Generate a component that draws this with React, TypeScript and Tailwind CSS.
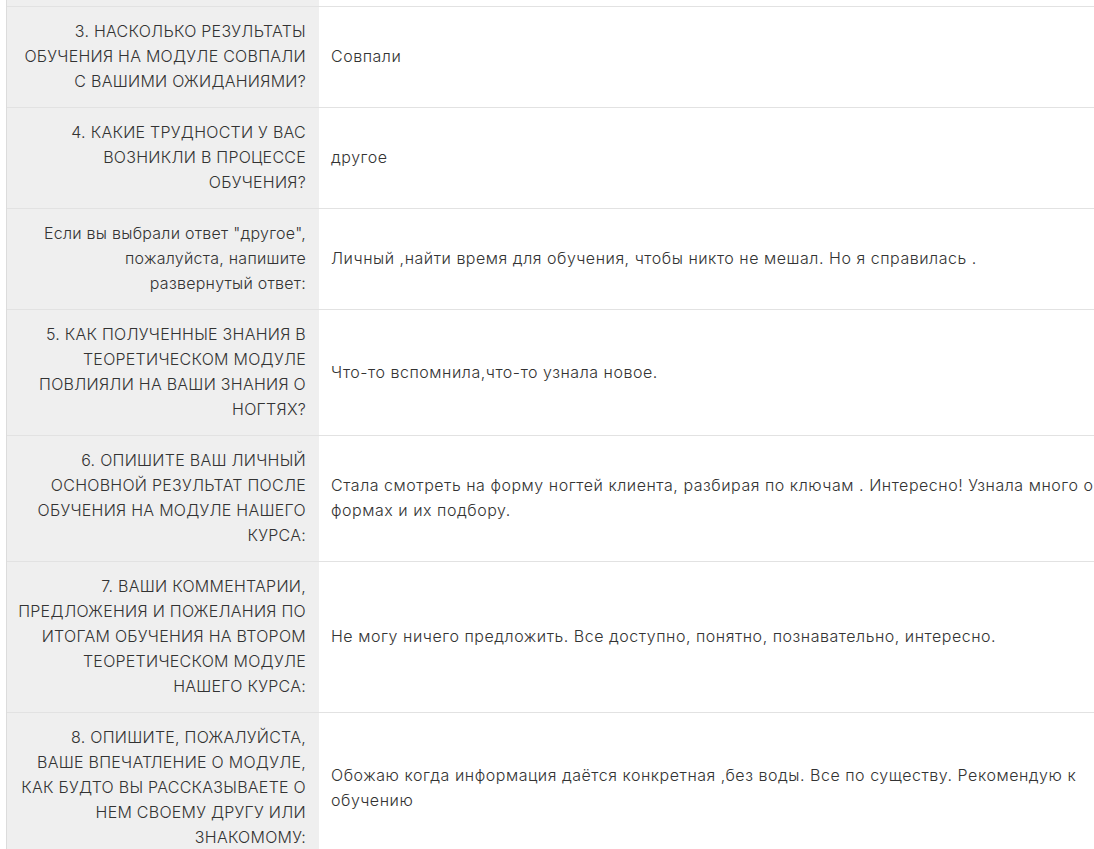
import React from "react";

type Row = {
  q: string[];
  a: string[];
};

const rows: Row[] = [
  {
    q: ["3. НАСКОЛЬКО РЕЗУЛЬТАТЫ", "ОБУЧЕНИЯ НА МОДУЛЕ СОВПАЛИ", "С ВАШИМИ ОЖИДАНИЯМИ?"],
    a: ["Совпали"],
  },
  {
    q: ["4. КАКИЕ ТРУДНОСТИ У ВАС", "ВОЗНИКЛИ В ПРОЦЕССЕ", "ОБУЧЕНИЯ?"],
    a: ["другое"],
  },
  {
    q: ['Если вы выбрали ответ "другое",', "пожалуйста, напишите", "развернутый ответ:"],
    a: ["Личный ,найти время для обучения, чтобы никто не мешал. Но я справилась ."],
  },
  {
    q: ["5. КАК ПОЛУЧЕННЫЕ ЗНАНИЯ В", "ТЕОРЕТИЧЕСКОМ МОДУЛЕ", "ПОВЛИЯЛИ НА ВАШИ ЗНАНИЯ О", "НОГТЯХ?"],
    a: ["Что-то вспомнила,что-то узнала новое."],
  },
  {
    q: ["6. ОПИШИТЕ ВАШ ЛИЧНЫЙ", "ОСНОВНОЙ РЕЗУЛЬТАТ ПОСЛЕ", "ОБУЧЕНИЯ НА МОДУЛЕ НАШЕГО", "КУРСА:"],
    a: [
      "Стала смотреть на форму ногтей клиента, разбирая по ключам . Интересно! Узнала много о",
      "формах и их подбору.",
    ],
  },
  {
    q: [
      "7. ВАШИ КОММЕНТАРИИ,",
      "ПРЕДЛОЖЕНИЯ И ПОЖЕЛАНИЯ ПО",
      "ИТОГАМ ОБУЧЕНИЯ НА ВТОРОМ",
      "ТЕОРЕТИЧЕСКОМ МОДУЛЕ",
      "НАШЕГО КУРСА:",
    ],
    a: ["Не могу ничего предложить. Все доступно, понятно, познавательно, интересно."],
  },
  {
    q: [
      "8. ОПИШИТЕ, ПОЖАЛУЙСТА,",
      "ВАШЕ ВПЕЧАТЛЕНИЕ О МОДУЛЕ,",
      "КАК БУДТО ВЫ РАССКАЗЫВАЕТЕ О",
      "НЕМ СВОЕМУ ДРУГУ ИЛИ",
      "ЗНАКОМОМУ:",
    ],
    a: [
      "Обожаю когда информация даётся конкретная ,без воды. Все по существу. Рекомендую к",
      "обучению",
    ],
  },
];

export default function App() {
  return (
    <div
      className="w-[1094px] h-[849px] overflow-hidden bg-white text-[16px] leading-[25px] font-light text-[#333333]"
      style={{ fontFamily: "Inter, 'Liberation Sans', sans-serif" }}
    >
      <div className="ml-[6px] w-[1120px] border-l border-[#dcdcdc]">
        {/* хвост предыдущей строки */}
        <div className="grid grid-cols-[312px_1fr] h-[6px]">
          <div className="bg-[#efefef]" />
          <div />
        </div>
        {rows.map((row, i) => (
          <div key={i} className="grid grid-cols-[312px_1fr] border-t border-[#e2e2e2]">
            <div className="bg-[#efefef] pt-[12px] pb-[13px] pr-[13px] text-right tracking-[0.016em]">
              {row.q.map((line, j) => (
                <div key={j} className="whitespace-nowrap">
                  {line}
                </div>
              ))}
            </div>
            <div className="flex flex-col justify-center pl-[12px] pt-[12px] pb-[13px] tracking-[0.033em]">
              {row.a.map((line, j) => (
                <div key={j} className="whitespace-nowrap">
                  {line}
                </div>
              ))}
            </div>
          </div>
        ))}
      </div>
    </div>
  );
}
